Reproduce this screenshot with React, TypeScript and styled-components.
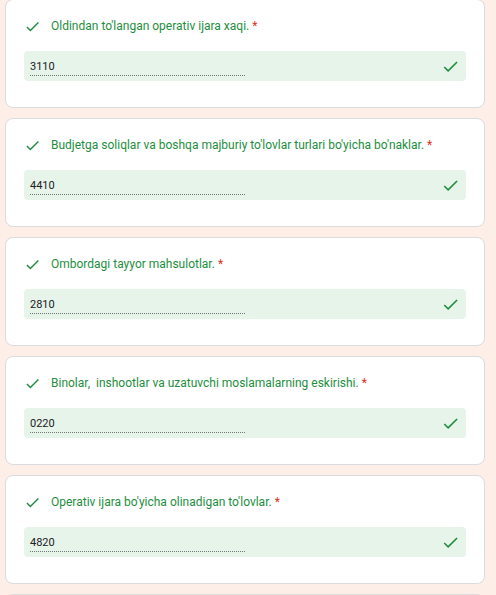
import React from 'react';
import styled, { createGlobalStyle } from 'styled-components';

const GlobalStyle = createGlobalStyle`
  html, body {
    margin: 0;
    padding: 0;
    background: #fdeee8;
    font-family: Roboto, "Liberation Sans", Arial, sans-serif;
  }
`;

const List = styled.div`
  display: flex;
  flex-direction: column;
  gap: 10px;
  width: 480px;
  margin: -1px 0 0 5px;
`;

const Card = styled.div`
  box-sizing: border-box;
  height: 109px;
  background: #ffffff;
  border: 1px solid #dadce0;
  border-radius: 8px;
  padding: 18px 18px 0 18px;
`;

const TitleRow = styled.div`
  display: flex;
  align-items: center;
  height: 16px;
`;

const TitleText = styled.span`
  margin-left: 10px;
  font-size: 12px;
  color: #1e8e3e;
  white-space: pre;
`;

const Required = styled.span`
  color: #d93025;
  margin-left: 3px;
`;

const AnswerBox = styled.div`
  display: flex;
  align-items: center;
  justify-content: space-between;
  height: 30px;
  margin-top: 17px;
  padding: 0 6px 0 6px;
  background: #e6f4ea;
  border-radius: 4px;
`;

const AnswerValue = styled.div`
  box-sizing: border-box;
  width: 215px;
  height: 18px;
  margin-top: 2px;
  font-size: 11px;
  line-height: 17px;
  color: #202124;
  border-bottom: 1px dotted #70757a;
`;

const CheckIcon = ({ size }: { size: number }) => (
  <svg width={size} height={size} viewBox="0 0 24 24" fill="#1e8e3e">
    <path d="M9 16.17L4.83 12l-1.42 1.41L9 19 21 7l-1.41-1.41z" />
  </svg>
);

const items = [
  { title: "Oldindan to'langan operativ ijara xaqi.", value: '3110' },
  { title: "Budjetga soliqlar va boshqa majburiy to'lovlar turlari bo'yicha bo'naklar.", value: '4410' },
  { title: 'Ombordagi tayyor mahsulotlar.', value: '2810' },
  { title: 'Binolar,  inshootlar va uzatuvchi moslamalarning eskirishi.', value: '0220' },
  { title: "Operativ ijara bo'yicha olinadigan to'lovlar.", value: '4820' },
  { title: '', value: '' },
];

export default function App() {
  return (
    <>
      <GlobalStyle />
      <List>
        {items.map((item, i) => (
          <Card key={`q__${i}`}>
            {item.title && (
              <>
                <TitleRow>
                  <CheckIcon size={17} />
                  <TitleText>
                    {item.title}
                    <Required>*</Required>
                  </TitleText>
                </TitleRow>
                <AnswerBox>
                  <AnswerValue>{item.value}</AnswerValue>
                  <CheckIcon size={19} />
                </AnswerBox>
              </>
            )}
          </Card>
        ))}
      </List>
    </>
  );
}
